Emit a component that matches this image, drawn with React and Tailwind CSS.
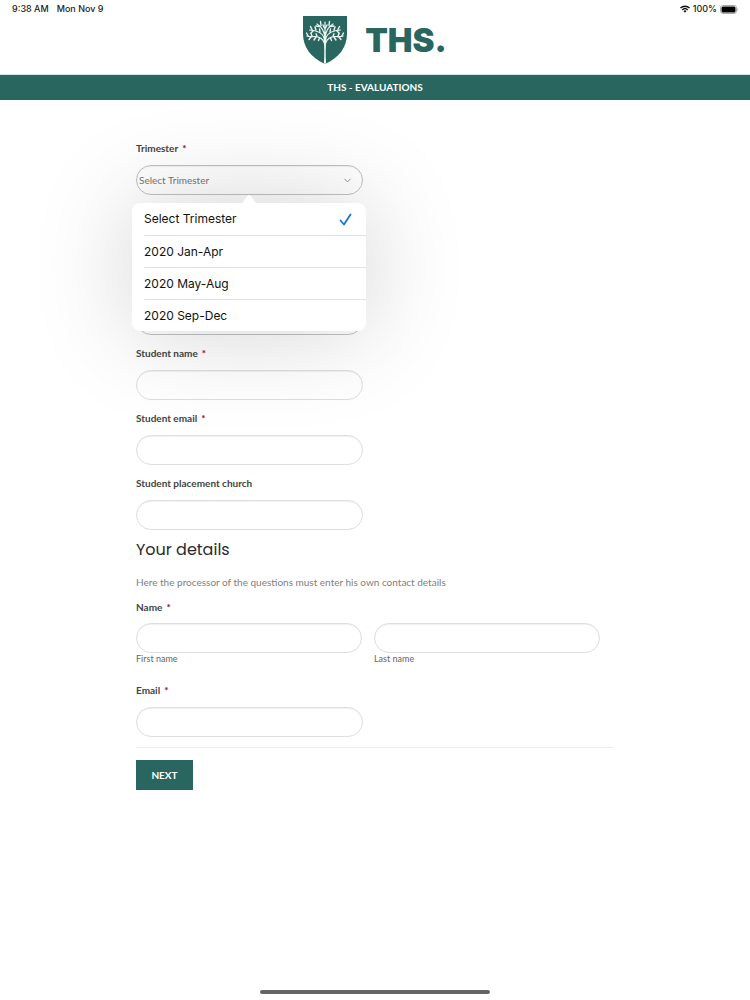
// App.jsx
import { useState } from "react";
import { ChevronDown } from "lucide-react";

const trimesters = ["Select Trimester", "2020 Jan-Apr", "2020 May-Aug", "2020 Sep-Dec"];

const control =
  "block w-full h-[30px] rounded-full border shadow-[inset_0_1px_1px_rgba(0,0,0,0.06)] bg-transparent text-[10px] text-[#777] outline-none";

function StatusBar() {
  return (
    <div className="flex h-4 items-end justify-between pr-[11px] pl-3 font-['Inter',sans-serif] text-[9px] leading-[14px] font-medium text-[#222]">
      <div className="flex gap-2">
        <span>9:38 AM</span>
        <span>Mon Nov 9</span>
      </div>
      <div className="flex items-center gap-[3px]">
        <svg width="10" height="8" viewBox="0 0 20 16" fill="none" stroke="#111" strokeWidth="2.8">
          <path d="M1 6a13 13 0 0 1 18 0" />
          <path d="M4.5 9.8a8 8 0 0 1 11 0" />
          <path d="M7 12l3 3.5 3-3.5a4.5 4.5 0 0 0-6 0z" fill="#111" stroke="none" />
        </svg>
        <span>100%</span>
        <svg width="19" height="9" viewBox="0 0 19 9">
          <rect x="0.5" y="0.5" width="16" height="8" rx="2.5" fill="none" stroke="#aaa" />
          <rect x="1.5" y="1.5" width="14" height="6" rx="1.5" fill="#000" />
          <path d="M17.5 3.2v2.6c1-.4 1-2.2 0-2.6z" fill="#999" />
        </svg>
      </div>
    </div>
  );
}

function Logo() {
  return (
    <a href="#" aria-label="THS." className="flex items-center gap-[18px]">
      <svg width="44" height="48" viewBox="0 0 44 48">
        <path d="M0 0h44v18c0 13-8 24-22 30C8 42 0 31 0 18z" fill="#28665f" />
        <path d="M20.9 47.3c.6-8 .5-17-.5-27h3.2c-1 10-1.1 19-.5 27l-1.1.7z" fill="#eef6f4" />
        <g fill="none" stroke="#eef6f4" strokeWidth="1.2" strokeLinecap="round">
          <path d="M21.3 27c-1-4-5-6.5-9-6.5s-6 .5-8.500-.5M22.7 27c1-4 5-6.5 9-6.5s6 .5 8.500-.5" />
          <path d="M21.5 22c-2-5-6-7.5-15-8M22.5 22c2-5 6-7.5 15-8" />
          <path d="M22 21c-1-6-3-10-8-13M22 21c1-6 3-10 8-13M22 21V6" />
        </g>
        <g fill="none" stroke="#eef6f4" strokeWidth="1.4" strokeLinecap="round">
          <path d="M3.5 17l1.500 2.500M8 17.500l1 2.500M13 17.800l1 2.500M6 23.500l2-2.500M11 24l2-3M15.500 24.500l1-2.500" />
          <path d="M40.5 17l-1.500 2.500M36 17.500l-1 2.500M31 17.800l-1 2.500M38 23.500l-2-2.500M33 24l-2-3M28.500 24.500l-1-2.500" />
          <path d="M7.500 10.500l1.500 3M12 11l1 3M16.500 13l.5 3M8 17l2-2" />
          <path d="M36.500 10.500l-1.500 3M32 11l-1 3M27.500 13l-.5 3M36 17l-2-2" />
          <path d="M17.5 5.500l.5 4M13 10l3.500.5M20 9l1.500 3M26.5 5.500l-.5 4M31 10l-3.500.5M24 9l-1.500 3" />
        </g>
      </svg>
      <span className="font-['Inter',sans-serif] text-[33px] leading-[46px] font-black text-[#28665f]">THS.</span>
    </a>
  );
}

function Label({ htmlFor, required, children }) {
  return (
    <label htmlFor={htmlFor} className="mb-[9px] block text-[10px] leading-4 font-bold text-[#444]">
      {children}
      {required && <span className="ml-1 text-[#8f1020]">*</span>}
    </label>
  );
}

function Field({ id, label, type = "text", required }) {
  return (
    <div className="mb-[10px] max-w-[227px]">
      <Label htmlFor={id} required={required}>{label}</Label>
      <input id={id} type={type} required={required} className={`${control} border-[#dedede] px-3`} />
    </div>
  );
}

function TrimesterMenu({ value, onSelect }) {
  return (
    <div className="absolute top-full -right-[3px] -left-1 z-10 mt-2 rounded-lg bg-white font-['Inter',sans-serif] shadow-[0_0_100px_rgba(0,0,20,0.18)]">
      <svg width="20" height="10" viewBox="0 0 20 10" className="absolute -top-[9px] left-1/2 -translate-x-1/2">
        <path d="M0 10c3 0 4-2 6-5 2-3 3-4 4-4s2 1 4 4c2 3 3 5 6 5z" fill="#fff" />
      </svg>
      <ul role="listbox" aria-label="Trimester" className="pl-3">
        {trimesters.map((name) => (
          <li key={name} role="option" aria-selected={name === value} className="h-8 border-t border-[#e2e2e4] first:border-t-0">
            <button
              type="button"
              onClick={() => onSelect(name)}
              className="flex h-full w-full items-center justify-between pr-[14px] text-left text-[12px] text-[#111]"
            >
              {name}
              {name === value && (
                <svg width="13" height="13" viewBox="0 0 13 13" fill="none" stroke="#1676d8" strokeWidth="1.8" strokeLinecap="round" strokeLinejoin="round">
                  <path d="M1.5 7.5l3.5 4 6.5-10" />
                </svg>
              )}
            </button>
          </li>
        ))}
      </ul>
    </div>
  );
}

export default function App() {
  const [trimester, setTrimester] = useState(trimesters[0]);

  return (
    <div className="flex min-h-screen flex-col bg-white font-['Lato',sans-serif]">
      <StatusBar />
      <header>
        <div className="flex h-[59px] justify-center border-b border-[#d5e6e6] pb-[10px]">
          <Logo />
        </div>
        <h1 className="bg-[#28665f] text-center text-[10px] leading-[25px] font-bold text-white">THS - EVALUATIONS</h1>
      </header>

      <main className="mx-auto w-full max-w-[478px] pt-10">
        <form>
          <div className="relative max-w-[227px]">
            <Label htmlFor="trimester" required>Trimester</Label>
            <div className="relative">
              <select
                id="trimester"
                value={trimester}
                onChange={(e) => setTrimester(e.target.value)}
                className={`${control} appearance-none border-[#c2c2c6] pl-[2px]`}
              >
                {trimesters.map((name) => (
                  <option key={name}>{name}</option>
                ))}
              </select>
              <ChevronDown size={11} className="pointer-events-none absolute top-[10px] right-[10px] text-[#888]" />
            </div>
            <TrimesterMenu value={trimester} onSelect={setTrimester} />
          </div>

          <div className="mt-[110px] mb-[10px] max-w-[227px]">
            <input type="text" aria-label="Course" className={`${control} border-[#c2c2c6] px-3`} />
          </div>

          <Field id="student-name" label="Student name" required />
          <Field id="student-email" label="Student email" type="email" required />
          <Field id="church" label="Student placement church" />

          <h2 className="font-['Poppins','Inter',sans-serif] text-[16px] leading-5 text-[#2a2a2e]">Your details</h2>
          <p className="mt-[14px] mb-[9px] text-[10px] leading-4 text-[#808080]">
            Here the processor of the questions must enter his own contact details
          </p>

          <fieldset className="mb-[17px]">
            <legend className="mb-2 text-[10px] leading-4 font-bold text-[#444]">
              Name<span className="ml-1 text-[#8f1020]">*</span>
            </legend>
            <div className="grid max-w-[464px] grid-cols-2 gap-3">
              <div>
                <input id="first-name" type="text" className={`${control} border-[#dedede] px-3`} />
                <label htmlFor="first-name" className="block text-[9px] leading-3 text-[#666]">First name</label>
              </div>
              <div>
                <input id="last-name" type="text" className={`${control} border-[#dedede] px-3`} />
                <label htmlFor="last-name" className="block text-[9px] leading-3 text-[#666]">Last name</label>
              </div>
            </div>
          </fieldset>

          <Field id="email" label="Email" type="email" required />

          <div className="border-t border-[#ececec] pt-3">
            <button type="submit" className="h-[30px] min-w-[57px] bg-[#28665f] px-[15px] text-[10px] font-bold text-white">
              NEXT
            </button>
          </div>
        </form>
      </main>

      <div className="mx-auto mt-auto mb-[6px] h-1 w-[230px] rounded-full bg-[#666]" />
    </div>
  );
}
